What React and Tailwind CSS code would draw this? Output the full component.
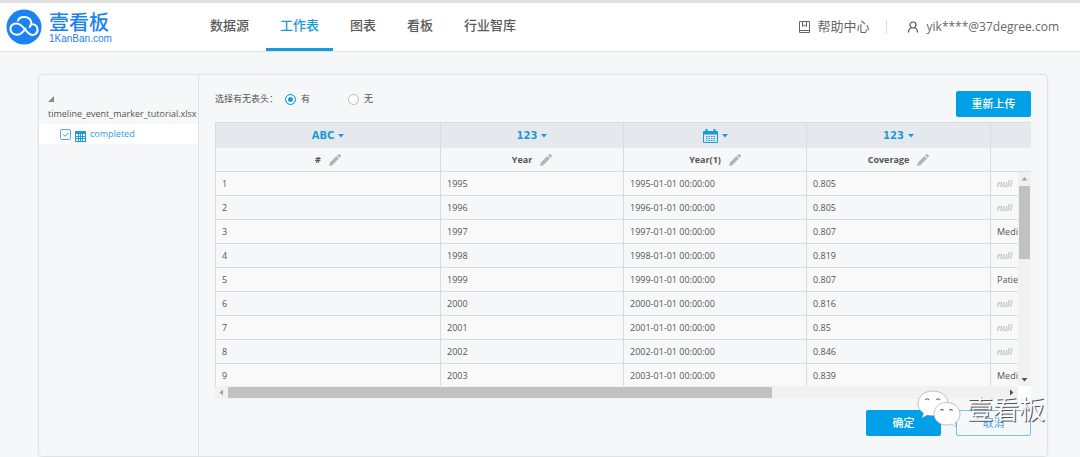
import { useState } from "react";

const NAV = ["数据源", "工作表", "图表", "看板", "行业智库"];

const COLUMNS = [
  { type: "ABC", name: "#" },
  { type: "123", name: "Year" },
  { type: "date", name: "Year(1)" },
  { type: "123", name: "Coverage" },
];

const ROWS = [
  ["1", "1995", "1995-01-01 00:00:00", "0.805", null],
  ["2", "1996", "1996-01-01 00:00:00", "0.805", null],
  ["3", "1997", "1997-01-01 00:00:00", "0.807", "Medicare"],
  ["4", "1998", "1998-01-01 00:00:00", "0.819", null],
  ["5", "1999", "1999-01-01 00:00:00", "0.807", "Patients"],
  ["6", "2000", "2000-01-01 00:00:00", "0.816", null],
  ["7", "2001", "2001-01-01 00:00:00", "0.85", null],
  ["8", "2002", "2002-01-01 00:00:00", "0.846", null],
  ["9", "2003", "2003-01-01 00:00:00", "0.839", "Medicare"],
];

export default function App() {
  const [header, setHeader] = useState("yes");
  const [checked, setChecked] = useState(true);

  return (
    <div className="min-h-screen bg-[#f5f7f9] pb-px font-['Open_Sans','Noto_Sans_CJK_SC',sans-serif] text-[9px] text-[#555]">
      <TopBar />

      <main className="relative mt-[22px] ml-[38px] mr-8 flex rounded-sm border border-[#dfe3e6] shadow-[0_0_2px_#dfe3e6]">
        {/* Sheet list */}
        <aside className="w-40 shrink-0 border-r border-[#dfe3e6] pt-[21px]">
          <svg width="6" height="6" viewBox="0 0 6 6" className="ml-[9px]">
            <path d="M6 0v6H0z" fill="#888" />
          </svg>
          <p className="mt-1 ml-[9px] h-[18px] leading-4 whitespace-nowrap">
            timeline_event_marker_tutorial.xlsx
          </p>
          <label className="flex h-5 items-center bg-white pl-[21px] text-[#2e9fdf]">
            <span className="relative h-[11px] w-[11px]">
              <input
                type="checkbox"
                checked={checked}
                onChange={(e) => setChecked(e.target.checked)}
                className="block h-[11px] w-[11px] appearance-none rounded-xs border border-[#55aee2] bg-white"
              />
              {checked && (
                <svg viewBox="0 0 11 11" className="pointer-events-none absolute inset-0">
                  <path d="M3 5.3l2 2L8.3 4" fill="none" stroke="#2e9fdf" />
                </svg>
              )}
            </span>
            <svg width="11" height="11" viewBox="0 0 11 11" className="ml-1 mt-1">
              <path d="M0 0h11v11H0z" fill="#1c9ddd" />
              <path
                d="M1 3h2v2H1zM4 3h1v2H4zM6 3h1v2H6zM8 3h2v2H8zM1 6h2v1H1zM4 6h1v1H4zM6 6h1v1H6zM8 6h2v1H8zM1 8h2v2H1zM4 8h1v2H4zM6 8h1v2H6zM8 8h2v2H8z"
                fill="#fff"
              />
            </svg>
            <span className="ml-1">completed</span>
          </label>
        </aside>

        {/* Preview */}
        <section className="min-w-0 flex-1 px-4 pt-4 pb-5">
          <div className="flex items-start justify-between">
            <fieldset className="flex h-4 items-center">
              <legend className="float-left mr-[7px] leading-4">选择有无表头：</legend>
              <Radio label="有" checked={header === "yes"} onChange={() => setHeader("yes")} />
              <span className="w-[38px]" />
              <Radio label="无" checked={header === "no"} onChange={() => setHeader("no")} />
            </fieldset>
            <button className="h-[26px] w-[75px] rounded-xs bg-[#00a0e9] text-[11px] font-medium text-white">
              重新上传
            </button>
          </div>

          <div className="relative mt-[5px] h-[264px] overflow-hidden border-l border-[#d8dce1]">
            <table className="w-full table-fixed border-separate border-spacing-0">
              <colgroup>
                <col className="w-[225px]" />
                <col className="w-[183px]" />
                <col className="w-[183px]" />
                <col className="w-[184px]" />
                <col />
              </colgroup>
              <thead>
                <tr className="h-[26px] bg-[#e5e9ee]">
                  {COLUMNS.map((col) => (
                    <th key={col.name} className="border-t border-r border-[#d8dce1] p-0">
                      <TypeButton type={col.type} />
                    </th>
                  ))}
                  <th className="border-t border-[#d8dce1] p-0" />
                </tr>
                <tr className="h-6">
                  {COLUMNS.map((col) => (
                    <th key={col.name} className="border-r border-b border-[#d8dce1] p-0 font-bold">
                      <span className="flex items-center justify-center gap-2">
                        {col.name}
                        <button aria-label="重命名">
                          <Pencil />
                        </button>
                      </span>
                    </th>
                  ))}
                  <th className="border-b border-[#d8dce1] p-0" />
                </tr>
              </thead>
              <tbody>
                {ROWS.map((row) => (
                  <tr key={row[0]} className="h-6 odd:bg-[#f9f9f9] even:bg-[#f5f7f9]">
                    {row.map((cell, i) => (
                      <td
                        key={i}
                        className="overflow-hidden border-r border-b border-[#d8dce1] px-1.5 py-0 whitespace-nowrap last:border-r-0"
                      >
                        {cell === null ? <i className="text-[#aaa]">null</i> : cell}
                      </td>
                    ))}
                  </tr>
                ))}
              </tbody>
            </table>

            {/* Vertical scrollbar */}
            <div className="absolute top-[50px] right-0 bottom-0 flex w-[13px] flex-col items-center bg-[#f1f1f1]">
              <Arrow d="M3.5 8.5h6L6.5 5z" fill="#a3a3a3" />
              <div className="mt-px h-[73px] w-[11px] bg-[#c1c1c1]" />
              <div className="flex-1" />
              <Arrow d="M3.5 5h6l-3 3.5z" fill="#505050" />
            </div>
          </div>

          {/* Horizontal scrollbar */}
          <div className="flex h-[13px] bg-white pr-[13px]">
            <div className="flex flex-1 items-center bg-[#f1f1f1]">
              <Arrow d="M8 3.5v6L4.5 6.5z" fill="#a3a3a3" />
              <div className="flex-1">
                <div className="h-[11px] w-[70%] bg-[#c1c1c1]" />
              </div>
              <Arrow d="M5 3.5v6l3.5-3z" fill="#505050" />
            </div>
          </div>

          <div className="mt-[11px] flex justify-end gap-[15px] text-[11px]">
            <button className="h-[26px] w-[75px] rounded-xs bg-[#00a0e9] font-medium text-white">
              确定
            </button>
            <button className="h-[26px] w-[75px] rounded-xs border border-[#6fc3ef] text-[#4aa8ee]">
              取消
            </button>
          </div>
        </section>

        <Watermark />
      </main>
    </div>
  );
}

function TopBar() {
  return (
    <header className="flex h-[52px] items-center border-t-3 border-b border-t-[#dfe0e0] border-b-[#dfe3e6] bg-white pr-[21px] pl-1.5 text-[13px] text-[#5a5a5a]">
      <a href="#" className="flex w-[190px] shrink-0 items-center gap-[7px] text-[#1b82f1]">
        <svg width="36" height="36" viewBox="0 0 36 36">
          <circle cx="18" cy="18" r="17.5" fill="#1b82f1" />
          <path
            d="M19.500 19.500c-2 3-4 6.200-8 6.200C2.500 25.700 2 14.500 10.500 14.500c6 0 8.500 7.500 13 10.300 5 3 8.500-.8 8-4.800-.4-3.200-3-5-6-4.700M12 11.500c1.500-4.800 11.500-5.300 13.300 1.500.4 2-.3 3.700-1.600 5"
            fill="none"
            stroke="#fff"
            strokeWidth="2"
            strokeLinecap="round"
          />
        </svg>
        <span className="flex flex-col pt-1">
          <span className="text-[20px] leading-5 font-medium">壹看板</span>
          <span className="font-['Liberation_Sans',sans-serif] text-[10px] leading-3">
            1KanBan.com
          </span>
        </span>
      </a>

      <nav className="flex h-full gap-[3px]">
        {NAV.map((item) => (
          <a
            key={item}
            href="#"
            className={`flex h-full items-center border-b-3 px-3.5 font-medium ${
              item === "工作表" ? "border-[#1a9bd9] text-[#1a9bd9]" : "border-transparent"
            }`}
          >
            {item}
          </a>
        ))}
      </nav>

      <div className="ml-auto flex items-center text-[#666]">
        <a href="#" className="flex items-center gap-2">
          <svg width="11" height="12" viewBox="0 0 11 12" fill="none" stroke="#666">
            <path d="M.5.5h10v11H.5zM3.500.5v5l2-1.500 2 1.500v-5M.5 9.500h10" />
          </svg>
          帮助中心
        </a>
        <span className="mx-4 h-3.5 w-px bg-[#ddd]" />
        <a href="#" className="ml-1 flex items-center gap-2 text-[12px]">
          <svg width="12" height="12" viewBox="0 0 12 12" fill="none" stroke="#555" strokeWidth="1.200">
            <circle cx="6" cy="4" r="3" />
            <path d="M1.500 11.500c0-2.500 1-4 3-4.700M10.500 11.500c0-2.500-1-4-3-4.700" />
          </svg>
          yik****@37degree.com
        </a>
      </div>
    </header>
  );
}

function Radio({ label, checked, onChange }) {
  return (
    <label className="flex items-center gap-[5px]">
      <input
        type="radio"
        name="header"
        checked={checked}
        onChange={onChange}
        className="h-[11px] w-[11px] appearance-none rounded-full border border-[#bbb] bg-white checked:border-[#1a9bd9] checked:bg-[#1a9bd9] checked:shadow-[inset_0_0_0_2px_white]"
      />
      {label}
    </label>
  );
}

function TypeButton({ type }) {
  return (
    <button className="inline-flex items-center gap-1 align-middle font-['DejaVu_Sans',sans-serif] text-[10px] leading-4 font-bold text-[#1a9bd9]">
      {type === "date" ? <Calendar /> : type}
      <svg width="6" height="4" viewBox="0 0 6 4">
        <path d="M0 0h6L3 3.500z" fill="currentColor" />
      </svg>
    </button>
  );
}

function Calendar() {
  return (
    <svg width="15" height="14" viewBox="0 0 15 14" fill="none" stroke="currentColor">
      <path d="M.5 2.500h14v11H.5z" />
      <path d="M1 4h13" strokeWidth="3" />
      <path d="M3.500 0v3M11.500 0v3" strokeWidth="2" />
      <path d="M3 7.500h9M3 9.500h9M3 11.500h9" strokeDasharray="1.500 1" />
    </svg>
  );
}

function Pencil() {
  return (
    <svg width="12" height="12" viewBox="0 0 12 12" className="block" fill="#b5b5b5">
      <path d="M0 12l.8-3.400L7.400 2 10 4.600l-6.600 6.600zM8.100 1.300L9.200.3c.4-.4 1-.4 1.400 0l1.100 1.100c.4.4.4 1 0 1.400l-1 1.100z" />
    </svg>
  );
}

function Arrow({ d, fill }) {
  return (
    <svg width="13" height="13" viewBox="0 0 13 13" className="shrink-0">
      <path d={d} fill={fill} />
    </svg>
  );
}

function Watermark() {
  return (
    <div className="pointer-events-none absolute right-0.5 bottom-7 flex items-center gap-1.5">
      <svg width="44" height="38" viewBox="0 0 44 38" fill="#fff" stroke="#999" strokeWidth=".6">
        <path d="M16 1C7.500 1 1 6.500 1 13.500c0 4 2 7.300 5.500 9.600L5 28l5.500-3c2 .6 4 .9 6 .8C24 26 31 20 31 13.500 31 6.500 24.500 1 16 1z" />
        <path d="M29.500 12.500C22 12.500 17 17.500 17 24s5.500 11 12.500 11c1.800 0 3.500-.3 5-.9l5 3-1.300-4.400C41.300 30.600 43 27.500 43 24c0-6.500-6-11.500-13.500-11.500z" />
        <path
          d="M8.500 10c.6-1.700 2.800-1.700 3.400 0M19.500 10c.6-1.700 2.800-1.700 3.400 0M23.500 20.500c.6-1.500 2.400-1.500 3 0M32.500 20.500c.6-1.500 2.400-1.500 3 0"
          fill="none"
          stroke="#666"
          strokeWidth="1.200"
        />
      </svg>
      <span className="text-[26px] leading-8 text-[#f5f7f9] [text-shadow:1px_1px_0_#555]">
        壹看板
      </span>
    </div>
  );
}
